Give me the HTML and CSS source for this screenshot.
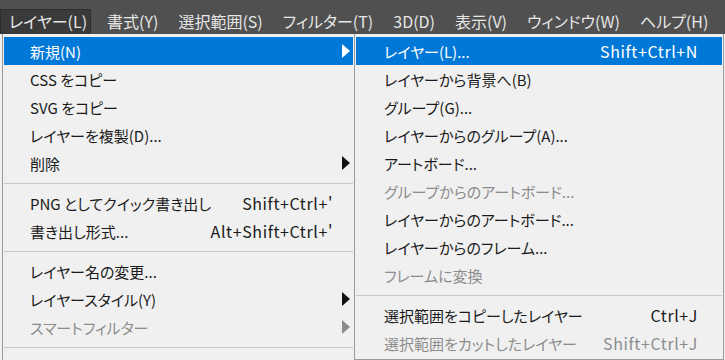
FILE: index.html
```html
<!DOCTYPE html>
<html lang="ja">
  <head>
    <meta charset="UTF-8" />
    <meta name="viewport" content="width=device-width, initial-scale=1.0" />
    <title>レイヤー メニュー</title>
    <link rel="stylesheet" href="styles.css">
  </head>
  <body>
    <div class="menubar">
      <span class="bar-item active">レイヤー(L)</span>
      <span class="bar-item">書式(Y)</span>
      <span class="bar-item">選択範囲(S)</span>
      <span class="bar-item">フィルター(T)</span>
      <span class="bar-item">3D(D)</span>
      <span class="bar-item">表示(V)</span>
      <span class="bar-item">ウィンドウ(W)</span>
      <span class="bar-item">ヘルプ(H)</span>
    </div>

    <div class="menus">
      <ul class="menu main">
        <li class="item selected"><span class="label">新規(N)</span><span class="key"></span><span class="arrow"></span></li>
        <li class="item"><span class="label">CSS をコピー</span></li>
        <li class="item"><span class="label">SVG をコピー</span></li>
        <li class="item"><span class="label">レイヤーを複製(D)...</span></li>
        <li class="item"><span class="label">削除</span><span class="key"></span><span class="arrow"></span></li>
        <li class="sep"></li>
        <li class="item"><span class="label">PNG としてクイック書き出し</span><span class="key">Shift+Ctrl+'</span></li>
        <li class="item"><span class="label">書き出し形式...</span><span class="key">Alt+Shift+Ctrl+'</span></li>
        <li class="sep"></li>
        <li class="item"><span class="label">レイヤー名の変更...</span></li>
        <li class="item"><span class="label">レイヤースタイル(Y)</span><span class="key"></span><span class="arrow"></span></li>
        <li class="item disabled"><span class="label">スマートフィルター</span><span class="key"></span><span class="arrow"></span></li>
        <li class="sep"></li>
        <li class="item"><span class="label">新規塗りつぶしレイヤー(W)</span><span class="key"></span><span class="arrow"></span></li>
      </ul>

      <ul class="menu sub">
        <li class="item selected"><span class="label">レイヤー(L)...</span><span class="key">Shift+Ctrl+N</span></li>
        <li class="item"><span class="label">レイヤーから背景へ(B)</span></li>
        <li class="item"><span class="label">グループ(G)...</span></li>
        <li class="item"><span class="label">レイヤーからのグループ(A)...</span></li>
        <li class="item"><span class="label">アートボード...</span></li>
        <li class="item disabled"><span class="label">グループからのアートボード...</span></li>
        <li class="item"><span class="label">レイヤーからのアートボード...</span></li>
        <li class="item"><span class="label">レイヤーからのフレーム...</span></li>
        <li class="item disabled"><span class="label">フレームに変換</span></li>
        <li class="sep"></li>
        <li class="item"><span class="label">選択範囲をコピーしたレイヤー</span><span class="key">Ctrl+J</span></li>
        <li class="item disabled"><span class="label">選択範囲をカットしたレイヤー</span><span class="key">Shift+Ctrl+J</span></li>
      </ul>
    </div>
  </body>
</html>
```

FILE: styles.css
```css
* {
  padding: 0;
  margin: 0;
  box-sizing: border-box;
}
body {
  width: 725px;
  height: 360px;
  overflow: hidden;
  background: #f0f0f0;
  font-family: "Noto Sans CJK JP", sans-serif;
  font-feature-settings: "palt";
  font-size: 15px;
  color: #1a1a1a;
}
.menubar {
  height: 34px;
  background: #505050;
  display: flex;
  align-items: flex-end;
  overflow: hidden;
}
.bar-item {
  flex-shrink: 0;
  white-space: nowrap;
  height: 25px;
  line-height: 23px;
  padding: 0 9px 0 8px;
  margin-right: 1px;
  font-size: 16px;
  color: #e6e6e6;
  border: 1px solid transparent;
  border-bottom: none;
}
.bar-item.active {
  background: #3a3a3a;
  border-color: #2e2e2e;
  padding-right: 3px;
  margin-right: 7px;
}
.menus {
  display: flex;
  align-items: flex-start;
  height: 326px;
  overflow: hidden;
}
.menu {
  list-style: none;
  background: #f0f0f0;
  border: 1px solid #9b9b9b;
  border-top: none;
  padding: 3px 1px 2px;
}
.main {
  width: 353px;
  margin-left: 2px;
}
.sub {
  width: 370px;
  margin-left: -1px;
}
.item {
  height: 28px;
  display: grid;
  grid-template-columns: 1fr auto 20px;
  align-items: center;
  white-space: nowrap;
}
.main .item {
  padding-left: 26px;
}
.sub .item {
  padding-left: 28px;
  grid-template-columns: 1fr auto 24px;
}
.key {
  text-align: right;
  font-size: 16px;
  letter-spacing: 0.6px;
}
.arrow {
  justify-self: center;
  width: 0;
  height: 0;
  border-left: 8px solid #111;
  border-top: 7px solid transparent;
  border-bottom: 7px solid transparent;
  margin-left: 6px;
}
.item.selected {
  background: #0078d7;
  color: #fff;
}
.item.selected .arrow {
  border-left-color: #fff;
}
.item.disabled {
  color: #8c8c8c;
}
.item.disabled .arrow {
  border-left-color: #8c8c8c;
}
.sep {
  height: 1px;
  background: #c9c9c9;
  margin: 6px 0 5px;
}
```
